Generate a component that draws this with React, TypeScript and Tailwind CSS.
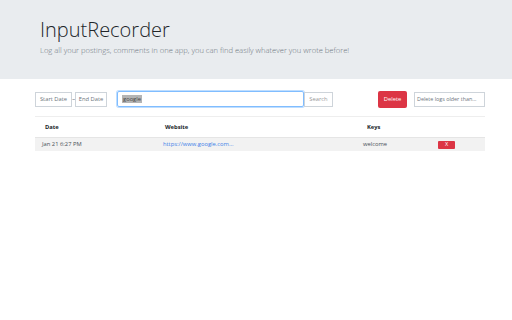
import React from "react";

export default function App() {
  const font = { fontFamily: '"Open Sans", "Noto Sans", sans-serif' };
  return (
    <div className="w-[512px] h-[320px] bg-white" style={font}>
      <div className="h-[79px] bg-[#e9ecef] pl-[40px] pt-[16px]">
        <div className="text-[20px] font-light leading-[28px] text-[#212529]">InputRecorder</div>
        <div className="text-[7.6px] font-light leading-[10px] text-[#6c757d] mt-[1px]">
          Log all your postings, comments in one app, you can find easily whatever you wrote before!
        </div>
      </div>
      <div className="pl-[35px] pr-[27px] pt-[11px] text-[5.8px] text-[#495057]">
        <div className="flex items-center h-[18px] whitespace-nowrap">
          <div className="flex items-center">
            <div className="border border-[#ced4da] h-[15px] w-[37px] flex items-center justify-center text-[#6c757d]">Start Date</div>
            <span className="w-[3px] text-center text-[#6c757d]">~</span>
            <div className="border border-[#ced4da] h-[15px] w-[32px] flex items-center justify-center text-[#6c757d]">End Date</div>
          </div>
          <div className="ml-[10px] flex items-center">
            <div className="w-[187px] h-[16px] border border-[#80bdff] rounded-[2px] shadow-[0_0_0_1px_rgba(0,123,255,0.25)] flex items-center px-[4px]">
              <span className="bg-[#b4b4b4] text-[#444] px-[1px]">google</span>
            </div>
            <div className="w-[29px] h-[15px] border border-[#ced4da] flex items-center justify-center text-[#999]">Search</div>
          </div>
          <div className="ml-auto flex items-center">
            <div className="w-[29px] h-[17px] bg-[#dc3545] rounded-[2px] text-white flex items-center justify-center">Delete</div>
            <div className="ml-[7px] w-[71px] h-[15px] border border-[#ced4da] flex items-center px-[2px] overflow-hidden text-[5.4px] text-[#6c757d]">Delete logs older than...</div>
          </div>
        </div>
        <div className="mt-[8px] border-t border-[#eeeeee]">
          <div className="flex h-[20px] items-center font-bold text-[#212529]">
            <div className="w-[120px] pl-[10px]">Date</div>
            <div className="w-[202px] pl-[10px]">Website</div>
            <div className="w-[128px] pl-[10px]">Keys</div>
          </div>
          <div className="flex h-[14px] items-center bg-[#f2f2f2] border-t border-[#e5e5e5]">
            <div className="w-[120px] pl-[7px]">Jan 21 6:27 PM</div>
            <div className="w-[201px] pl-[8px] text-[#3d7ee8]">https://www.google.com...</div>
            <div className="w-[82px] pl-[7px]">welcome</div>
            <div className="w-[17px] h-[8px] bg-[#dc3545] text-white flex items-center justify-center text-[5.5px] rounded-[1px]">X</div>
          </div>
        </div>
      </div>
    </div>
  );
}
